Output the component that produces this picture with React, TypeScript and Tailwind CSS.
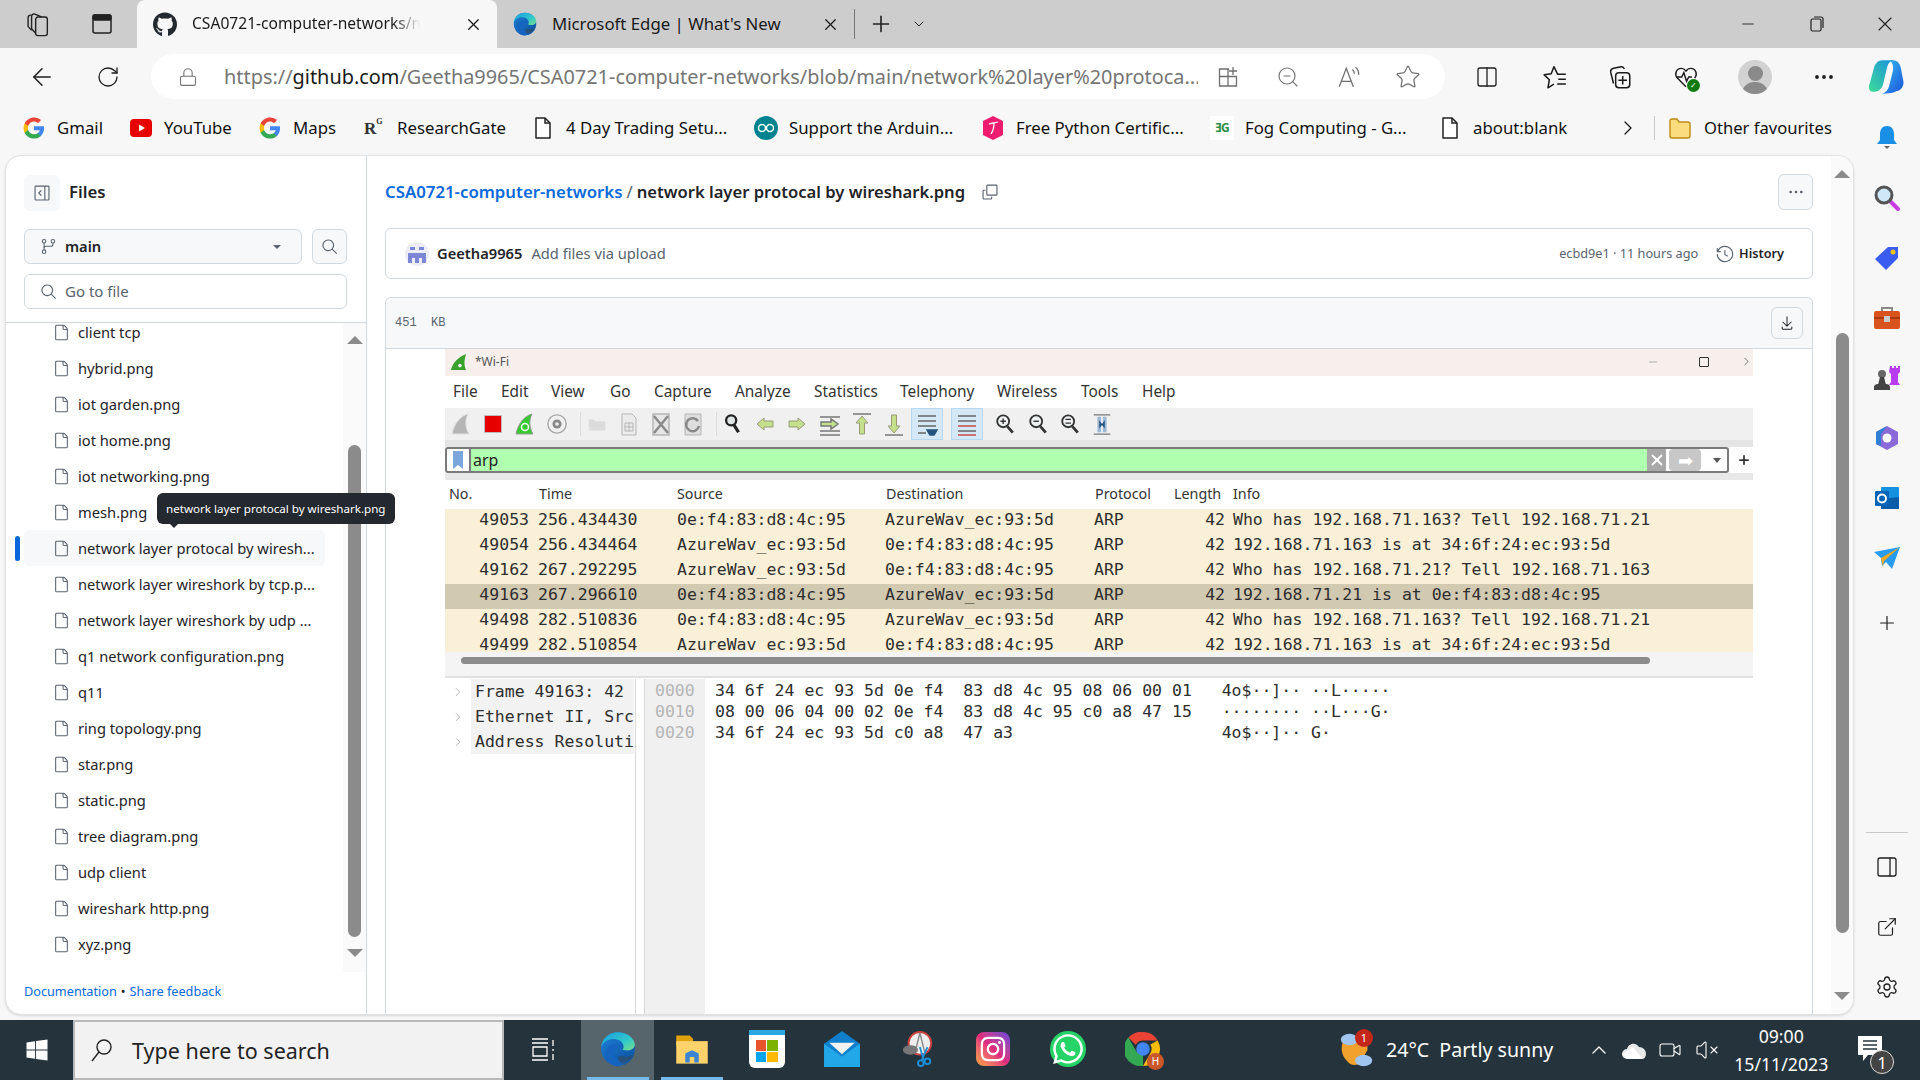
import type { ReactNode } from "react";
import {
  ArrowLeft,
  ChevronDown,
  ChevronRight,
  ChevronUp,
  Columns2,
  Ellipsis,
  ExternalLink,
  Lock,
  Minus,
  PanelRight,
  Plus,
  RotateCw,
  Settings,
  Star,
  Video,
  VolumeX,
  X,
  ZoomOut,
} from "lucide-react";
import { FaGithub, FaInstagram, FaWhatsapp, FaWindows } from "react-icons/fa";
import {
  GoCopy,
  GoDownload,
  GoFile,
  GoGitBranch,
  GoHistory,
  GoKebabHorizontal,
  GoSearch,
  GoSidebarExpand,
} from "react-icons/go";

const files = [
  "client tcp",
  "hybrid.png",
  "iot garden.png",
  "iot home.png",
  "iot networking.png",
  "mesh.png",
  "network layer protocal by wiresh...",
  "network layer wireshork by tcp.p...",
  "network layer wireshork by udp ...",
  "q1 network configuration.png",
  "q11",
  "ring topology.png",
  "star.png",
  "static.png",
  "tree diagram.png",
  "udp client",
  "wireshark http.png",
  "xyz.png",
];

const packets = [
  ["49053", "256.434430", "0e:f4:83:d8:4c:95", "AzureWav_ec:93:5d", "Who has 192.168.71.163? Tell 192.168.71.21"],
  ["49054", "256.434464", "AzureWav_ec:93:5d", "0e:f4:83:d8:4c:95", "192.168.71.163 is at 34:6f:24:ec:93:5d"],
  ["49162", "267.292295", "AzureWav_ec:93:5d", "0e:f4:83:d8:4c:95", "Who has 192.168.71.21? Tell 192.168.71.163"],
  ["49163", "267.296610", "0e:f4:83:d8:4c:95", "AzureWav_ec:93:5d", "192.168.71.21 is at 0e:f4:83:d8:4c:95"],
  ["49498", "282.510836", "0e:f4:83:d8:4c:95", "AzureWav_ec:93:5d", "Who has 192.168.71.163? Tell 192.168.71.21"],
  ["49499", "282.510854", "AzureWav_ec:93:5d", "0e:f4:83:d8:4c:95", "192.168.71.163 is at 34:6f:24:ec:93:5d"],
];

const hexLines = [
  ["0000", "34 6f 24 ec 93 5d 0e f4  83 d8 4c 95 08 06 00 01", "4o$··]·· ··L·····"],
  ["0010", "08 00 06 04 00 02 0e f4  83 d8 4c 95 c0 a8 47 15", "········ ··L···G·"],
  ["0020", "34 6f 24 ec 93 5d c0 a8  47 a3                  ", "4o$··]·· G·"],
];

function GoogleIcon() {
  return (
    <svg viewBox="0 0 24 24" className="w-[22px] h-[22px]">
      <path fill="#4285f4" d="M23 12.3c0-.8-.1-1.600-.2-2.300H12v4.400h6.200c-.3 1.400-1.100 2.600-2.300 3.400v2.800h3.700c2.100-2 3.400-4.900 3.400-8.300z" />
      <path fill="#34a853" d="M12 23.500c3.100 0 5.700-1 7.600-2.800l-3.700-2.900c-1 .7-2.300 1.100-3.900 1.100-3 0-5.500-2-6.400-4.700H1.800v2.900c1.900 3.800 5.800 6.400 10.200 6.400z" />
      <path fill="#fbbc05" d="M5.600 14.200c-.5-1.400-.5-3 0-4.400V6.900H1.800c-1.600 3.200-1.600 7 0 10.200l3.800-2.900z" />
      <path fill="#ea4335" d="M12 5c1.700 0 3.200.6 4.400 1.700l3.300-3.300C17.700 1.600 15.100.500 12 .500 7.600.500 3.700 3.100 1.800 6.900l3.800 2.900C6.500 7 9 5 12 5z" />
    </svg>
  );
}

function PageIcon() {
  return (
    <svg viewBox="0 0 20 24" className="w-[20px] h-[24px]" fill="#fff" stroke="#222" strokeWidth="1.5">
      <path d="M3 2h9l5 5v15H3z" strokeLinejoin="round" />
      <path d="M12 2v5h5" fill="none" />
    </svg>
  );
}

const bookmarks: { label: string; width: string; icon: ReactNode }[] = [
  { label: "Gmail", width: "w-[107px]", icon: <GoogleIcon /> },
  {
    label: "YouTube",
    width: "w-[129px]",
    icon: (
      <svg viewBox="0 0 22 22" className="w-[24px] h-[22px]">
        <rect x="0" y="2" width="22" height="18" rx="4" fill="#e60000" />
        <path d="M9 7.500v7l6-3.500z" fill="#fff" />
      </svg>
    ),
  },
  { label: "Maps", width: "w-[104px]", icon: <GoogleIcon /> },
  {
    label: "ResearchGate",
    width: "w-[169px]",
    icon: (
      <div className="w-[24px] h-[24px] bg-[#f7f7f7] flex items-start text-[#333] font-['Liberation_Serif',serif] font-bold leading-none pt-[4px] pl-[2px]">
        <span className="text-[17px]">R</span>
        <span className="text-[8px] -mt-[2px]">G</span>
      </div>
    ),
  },
  { label: "4 Day Trading Setu...", width: "w-[223px]", icon: <PageIcon /> },
  {
    label: "Support the Arduin...",
    width: "w-[227px]",
    icon: (
      <svg viewBox="0 0 24 24" className="w-[24px] h-[24px]">
        <circle cx="12" cy="12" r="12" fill="#00838f" />
        <circle cx="8" cy="12" r="3.500" fill="none" stroke="#fff" strokeWidth="1.500" />
        <circle cx="16" cy="12" r="3.500" fill="none" stroke="#fff" strokeWidth="1.500" />
      </svg>
    ),
  },
  {
    label: "Free Python Certific...",
    width: "w-[229px]",
    icon: (
      <svg viewBox="0 0 24 24" className="w-[24px] h-[26px]">
        <path d="M12 0l10 5v14l-10 5L2 19V5z" fill="#ed1c6f" />
        <path d="M8 8c3-1 6-1 9-2M13 7c0 4-1 8-3 11" fill="none" stroke="#fff" strokeWidth="1.300" />
      </svg>
    ),
  },
  {
    label: "Fog Computing - G...",
    width: "w-[228px]",
    icon: (
      <div className="w-[24px] h-[24px] bg-white flex items-center justify-center text-[#2f8d46] text-[12px] font-bold leading-none tracking-[-1px]">
        ƎG
      </div>
    ),
  },
  { label: "about:blank", width: "w-[178px]", icon: <PageIcon /> },
];

function EdgeLogo({ className }: { className: string }) {
  return (
    <svg viewBox="0 0 32 32" className={className}>
      <defs>
        <linearGradient id="edgeTop" x1="0" y1="0" x2="1" y2="1">
          <stop offset="0" stopColor="#1b9de2" />
          <stop offset="0.6" stopColor="#30c8c9" />
          <stop offset="1" stopColor="#7be08c" />
        </linearGradient>
        <linearGradient id="edgeLow" x1="0" y1="0" x2="1" y2="1">
          <stop offset="0" stopColor="#1d7fd6" />
          <stop offset="1" stopColor="#0b4f9e" />
        </linearGradient>
      </defs>
      <circle cx="16" cy="16" r="15" fill="url(#edgeLow)" />
      <path d="M16 1C8 1 2 6.500 1 14c2-5 7-7 11-7 6 0 9 3.500 9 7 0 1.500-1 2.500-1 2.500s4.500 2 8 0c2-1 3-3 3-5C30 6 24 1 16 1z" fill="url(#edgeTop)" />
      <path d="M13 31c-6-1.500-9-7-8.500-12 .7-4 4-7 8-7 3.500 0 5.500 1.500 6 3-3-.5-7 .8-7 5 0 4.500 5 7 9.500 6.300 3-.4 5-1.500 6.500-3-3 5-8.500 9-14.500 7.700z" fill="#1565c0" />
      <path d="M19 22c3 1.500 7 1 10-1-1 4-5 7-9 8-2.500-1-4-3-4-5 0-1 .8-2 3-2z" fill="#37474f" opacity="0.55" />
    </svg>
  );
}

function Tab({ active, icon, title, titleClass }: { active?: boolean; icon: ReactNode; title: string; titleClass: string }) {
  return (
    <div className={active ? "w-[360px] h-12 bg-[#f7f7f7] rounded-t-lg flex items-center pl-[16px] text-[#1a1a1a]" : "w-[357px] h-12 flex items-center pl-[16px] text-[#1a1a1a]"}>
      <div className="w-[24px] flex justify-center shrink-0">{icon}</div>
      <div className={`ml-[15px] whitespace-nowrap overflow-hidden ${titleClass}`}>{title}</div>
      <X className="ml-auto mr-[14px] shrink-0" size={19} strokeWidth={1.6} />
    </div>
  );
}

function TabStrip() {
  return (
    <div className="h-12 bg-[#cdcdcd] flex items-center shrink-0">
      <div className="w-[76px] flex justify-center">
        <svg viewBox="0 0 24 24" className="w-[28px] h-[28px]" fill="none" stroke="#222" strokeWidth="1.200">
          <rect x="10" y="6" width="10" height="16" rx="2" />
          <path d="M10 20L6.500 16V6c0-2 1-3 3-2.500L15 6" />
          <path d="M6.500 17.500L3.500 14V7c0-2 1-3 3-2.500" />
        </svg>
      </div>
      <div className="w-[61px] flex justify-start pl-[14px]">
        <svg viewBox="0 0 24 24" className="w-[24px] h-[24px]" fill="none" stroke="#222" strokeWidth="1.500">
          <rect x="3" y="3" width="18" height="18" rx="2" />
          <rect x="3" y="3" width="18" height="5" rx="1.500" fill="#222" />
        </svg>
      </div>
      <Tab
        active
        icon={<FaGithub size={25} color="#24292f" />}
        title="CSA0721-computer-networks/network"
        titleClass="w-[228px] text-[15.6px] [mask-image:linear-gradient(to_right,black_88%,transparent)]"
      />
      <Tab icon={<EdgeLogo className="w-[26px] h-[26px]" />} title="Microsoft Edge | What's New" titleClass="w-[260px] text-[16.8px]" />
      <div className="w-px h-[30px] bg-[#777]" />
      <Plus className="ml-[13px]" size={26} strokeWidth={1.500} color="#222" />
      <ChevronDown className="ml-[17px]" size={16} strokeWidth={1.500} color="#222" />
      <div className="ml-auto flex items-center text-[#222]">
        <Minus size={18} strokeWidth={1.200} className="mr-[51px]" />
        <svg viewBox="0 0 18 18" className="w-[18px] h-[18px] mr-[47px]" fill="none" stroke="#222" strokeWidth="1.200">
          <rect x="3" y="4" width="10" height="12" rx="1.500" />
          <path d="M6 2h7a2 2 0 0 1 2 2v9" />
        </svg>
        <X size={24} strokeWidth={1.100} className="mr-[23px]" />
      </div>
    </div>
  );
}

function AddressBar() {
  return (
    <div className="h-[60px] bg-[#f7f7f7] flex items-center pb-[3px] shrink-0 text-[#1f1f1f]">
      <div className="w-[84px] flex justify-center pl-0">
        <ArrowLeft size={28} strokeWidth={1.300} />
      </div>
      <div className="w-[48px] flex justify-center">
        <RotateCw size={24} strokeWidth={1.300} />
      </div>
      <div className="ml-[19px] w-[1294px] h-[45px] bg-white rounded-full flex items-center text-[#757575]">
        <Lock className="ml-[27px] shrink-0" size={20} strokeWidth={1.300} />
        <div className="ml-[26px] w-[974px] text-[19.9px] whitespace-nowrap overflow-hidden">
          https://<span className="text-[#1a1a1a]">github.com</span>/Geetha9965/CSA0721-computer-networks/blob/main/network%20layer%20protoca...
        </div>
        <svg viewBox="0 0 24 24" className="ml-[18px] w-[24px] h-[24px] shrink-0" fill="none" stroke="#6f6f6f" strokeWidth="1.300">
          <path d="M13 4H3.500v17H20.500V11.500H3.500M12 4v17M17 2v8M13 6h8" />
        </svg>
        <ZoomOut className="ml-[36px] shrink-0" size={24} strokeWidth={1.200} />
        <svg viewBox="0 0 24 24" className="ml-[36px] w-[26px] h-[26px] shrink-0" fill="none" stroke="#6f6f6f" strokeWidth="1.200">
          <path d="M3 21L9.500 4 16 21M5 16h9M15 5c1.500 1 2 2.500 2 4M18 3c2.200 1.500 3 4 3 7" />
        </svg>
        <Star className="ml-[33px] shrink-0" size={26} strokeWidth={1.200} />
      </div>
      <Columns2 className="ml-[30px]" size={24} strokeWidth={1.300} />
      <svg viewBox="0 0 24 24" className="ml-[43px] w-[26px] h-[26px]" fill="none" stroke="#1a1a1a" strokeWidth="1.400" strokeLinejoin="round">
        <path d="M14.500 9.500L11 2.500 8.500 9 2 10l4.800 4.500L5.500 22l5.500-3.500" />
        <path d="M14 9.500h8M15 14h7M14 18.500h8" />
      </svg>
      <svg viewBox="0 0 24 24" className="ml-[39px] w-[26px] h-[26px]" fill="none" stroke="#1a1a1a" strokeWidth="1.400">
        <path d="M6 18L3.500 8c-.4-2 .5-3.500 2.500-4l7-1.500c1.500-.2 2.500.5 3 2" />
        <rect x="8" y="8" width="13" height="14" rx="3" />
        <path d="M14.500 11v8M10.500 15h8" />
      </svg>
      <div className="ml-[40px] w-[26px] h-[26px] relative">
        <svg viewBox="0 0 24 24" className="w-[26px] h-[26px]" fill="none" stroke="#1a1a1a" strokeWidth="1.300">
          <path d="M12 21L4 13C1 9.500 3 4 7.500 4c2 0 3.500 1 4.500 2.500C13 5 14.500 4 16.500 4 21 4 23 9.500 20 13" />
          <path d="M3 12h5l2-4 2.500 8 2-4h3" />
        </svg>
        <div className="absolute -right-[1px] -bottom-[2px] w-[13px] h-[13px] rounded-full bg-[#107c10] flex items-center justify-center text-white text-[8px] leading-none">✓</div>
      </div>
      <div className="ml-[39px] w-[34px] h-[34px] rounded-full bg-[#d2d2d2] flex flex-col items-center justify-end overflow-hidden">
        <div className="w-[15px] h-[15px] rounded-full bg-[#8a8a8a] mb-[1px]" />
        <div className="w-[26px] h-[12px] rounded-t-full bg-[#8a8a8a]" />
      </div>
      <Ellipsis className="ml-[40px]" size={24} strokeWidth={1.800} />
      <svg viewBox="0 0 32 32" className="ml-[32px] w-[36px] h-[36px]">
        <defs>
          <linearGradient id="copA" x1="0" y1="1" x2="1" y2="0">
            <stop offset="0" stopColor="#3ddc97" />
            <stop offset="1" stopColor="#1a8fe0" />
          </linearGradient>
          <linearGradient id="copB" x1="0" y1="0" x2="1" y2="1">
            <stop offset="0" stopColor="#35c4f5" />
            <stop offset="1" stopColor="#1d52d8" />
          </linearGradient>
        </defs>
        <path d="M13 1h10c-3 .5-5 2.500-6 6l-3 13c-1 6-4 9-8 9H4c-2.500 0-3.500-2.500-3-5.500L5 9c1-5 4-8 8-8z" fill="url(#copA)" />
        <path d="M19 1h3c4 0 6 2.500 7 6l2.500 13c.5 4-2 8-6 8.500C23 30 18 31 12 31c4-1 6-4 7-8l3-12c1-4 0-8-3-10z" fill="url(#copB)" />
      </svg>
    </div>
  );
}

function BookmarkBar() {
  return (
    <div className="h-[47px] flex items-center pl-[22px] pb-[7px] shrink-0 text-[#111]">
      {bookmarks.map((b) => (
        <div key={b.label} className={`${b.width} flex items-center shrink-0`}>
          <div className="w-[24px] h-[26px] flex items-center justify-center shrink-0">{b.icon}</div>
          <span className="ml-[11px] text-[16.8px] whitespace-nowrap">{b.label}</span>
        </div>
      ))}
      <ChevronRight className="shrink-0" size={24} strokeWidth={1.200} />
      <div className="ml-[14px] w-px h-[24px] bg-[#c8c8c8] shrink-0" />
      <svg viewBox="0 0 24 24" className="ml-[13px] w-[24px] h-[24px] shrink-0" fill="#fbdc7e" stroke="#bd8c16" strokeWidth="1.400">
        <path d="M2 5a2 2 0 0 1 2-2h5l2 3h9a2 2 0 0 1 2 2v12a2 2 0 0 1-2 2H4a2 2 0 0 1-2-2z" />
      </svg>
      <span className="ml-[12px] text-[16.6px] whitespace-nowrap">Other favourites</span>
    </div>
  );
}

function ScrollTrack({ width, thumbTop, thumbHeight, bottomGap }: { width: string; thumbTop: string; thumbHeight: string; bottomGap: string }) {
  return (
    <div className={`${width} bg-[#fafafa] flex flex-col items-center shrink-0`}>
      <div className={`w-0 h-0 border-x-[8px] border-x-transparent border-b-[8px] border-b-[#8b8b8b] ${thumbTop}`} />
      <div className={`w-[13px] rounded-full bg-[#8b8b8b] ${thumbHeight}`} />
      <div className={`w-0 h-0 border-x-[8px] border-x-transparent border-t-[8px] border-t-[#8b8b8b] ${bottomGap}`} />
    </div>
  );
}

function FileSidebar() {
  return (
    <div className="w-[361px] h-full border-r border-[#d1d9e0] flex flex-col shrink-0 relative">
      <div className="h-[167px] border-b border-[#d1d9e0] px-[18px] pt-[19px] shrink-0">
        <div className="flex items-center">
          <div className="w-9 h-9 rounded-md bg-[#f6f8fa] flex items-center justify-center text-[#59636e]">
            <GoSidebarExpand size={18} />
          </div>
          <span className="ml-[9px] pb-[2px] text-[16.8px] font-semibold text-[#1f2328]">Files</span>
        </div>
        <div className="flex gap-[10px] mt-[18px]">
          <div className="w-[278px] h-[35px] rounded-md bg-[#f6f8fa] border border-[#d1d9e0] flex items-center pl-[15px] pr-[20px] text-[#1f2328]">
            <GoGitBranch size={17} color="#59636e" />
            <span className="ml-[8px] text-[14.7px] font-semibold">main</span>
            <div className="ml-auto w-0 h-0 border-x-[4px] border-x-transparent border-t-[4px] border-t-[#59636e]" />
          </div>
          <div className="w-[35px] h-[35px] rounded-md bg-[#f6f8fa] border border-[#d1d9e0] flex items-center justify-center text-[#59636e]">
            <GoSearch size={17} />
          </div>
        </div>
        <div className="mt-[10px] w-[323px] h-[35px] rounded-md border border-[#d1d9e0] flex items-center pl-[15px]">
          <GoSearch size={17} color="#59636e" />
          <span className="ml-[8px] text-[15px] text-[#59636e]">Go to file</span>
        </div>
      </div>
      <div className="h-[649px] flex overflow-hidden shrink-0">
        <div className="flex-1 -mt-[9px] pl-[9px]">
          {files.map((name, i) => (
            <div key={name} className="h-9 flex items-center">
              <div className={i === 6 ? "w-[5px] h-[25px] bg-[#0969da] rounded-full" : "w-[5px]"} />
              <div className={i === 6 ? "ml-[4px] w-[301px] h-9 rounded-md bg-[#f6f8fa] flex items-center pl-[29px]" : "ml-[4px] w-[301px] h-9 flex items-center pl-[29px]"}>
                <GoFile size={17} color="#59636e" />
                <span className="ml-[8px] text-[14.7px] text-[#1f2328] whitespace-nowrap">{name}</span>
              </div>
            </div>
          ))}
        </div>
        <ScrollTrack width="w-[23px]" thumbTop="mt-[13px]" thumbHeight="mt-[101px] h-[492px]" bottomGap="mt-[12px]" />
      </div>
      <div className="flex-1 flex items-center pl-[18px] text-[12.7px] text-[#0969da] pb-[2px]">
        <span>Documentation</span>
        <span className="mx-1 text-[#1f2328]">•</span>
        <span>Share feedback</span>
      </div>
      <div className="absolute left-[151px] top-[337px] z-10 h-[31px] px-[9px] rounded-md bg-[#24292f] text-white text-[11.6px] flex items-center whitespace-nowrap">
        network layer protocal by wireshark.png
        <div className="absolute left-[13px] -bottom-[4px] w-0 h-0 border-x-[4px] border-x-transparent border-t-[4px] border-t-[#24292f]" />
      </div>
    </div>
  );
}

function ToolIcon({ children, extra }: { children: ReactNode; extra?: string }) {
  return <div className={`w-[32px] h-[32px] flex items-center justify-center shrink-0 ${extra ?? ""}`}>{children}</div>;
}

function Arrow({ dir, color }: { dir: "left" | "right"; color: string }) {
  const rotate = { left: 0, right: 180 }[dir];
  return (
    <svg viewBox="0 0 20 20" className="w-[20px] h-[20px]" style={{ transform: `rotate(${rotate}deg)` }}>
      <path d="M2 10l7-6v3h9v6H9v3z" fill={color} stroke="#9a9a7a" strokeWidth="1" />
    </svg>
  );
}

function Magnifier({ sign }: { sign: string }) {
  return (
    <svg viewBox="0 0 24 24" className="w-[22px] h-[22px]" fill="none" stroke="#333" strokeWidth="2">
      <circle cx="10" cy="9" r="6.500" fill="#eef2f2" />
      <path d="M14.500 14.500l6 7" strokeWidth="3" />
      <path d={sign} strokeWidth="1.500" />
    </svg>
  );
}

function SharkToolbar() {
  return (
    <div className="h-[32px] bg-[#f0f0f0] flex items-center shrink-0">
      <ToolIcon>
        <svg viewBox="0 0 24 24" className="w-[24px] h-[24px]">
          <path d="M3 22C5 12 11 4 19 2c-3 6-3 13 1 20z" fill="#b5b5b5" stroke="#dedede" />
        </svg>
      </ToolIcon>
      <ToolIcon>
        <div className="w-[18px] h-[18px] bg-[#e60000] border border-[#bbb]" />
      </ToolIcon>
      <ToolIcon>
        <svg viewBox="0 0 24 24" className="w-[24px] h-[24px]">
          <path d="M3 22C5 12 11 4 19 2c-3 6-3 13 1 20z" fill="#35c92f" stroke="#9a9a9a" />
          <circle cx="12" cy="15" r="3.500" fill="none" stroke="#fff" strokeWidth="1.500" />
        </svg>
      </ToolIcon>
      <ToolIcon>
        <svg viewBox="0 0 24 24" className="w-[22px] h-[22px]">
          <circle cx="12" cy="12" r="10" fill="#f0f0f0" stroke="#a8a8a8" strokeWidth="1.500" />
          <circle cx="12" cy="12" r="5" fill="#888" />
          <circle cx="12" cy="12" r="2" fill="#eee" />
        </svg>
      </ToolIcon>
      <div className="w-px h-[24px] bg-[#dcdcdc] ml-[7px]" />
      <ToolIcon>
        <svg viewBox="0 0 24 24" className="w-[22px] h-[22px]">
          <path d="M3 7h6l1 2h11v10H3z" fill="#dcdcdc" />
        </svg>
      </ToolIcon>
      <ToolIcon>
        <svg viewBox="0 0 24 24" className="w-[24px] h-[24px]" fill="#ececec" stroke="#b5b5b5">
          <path d="M5 2h10l4 4v17H5z" />
          <path d="M8 11h8v8H8zM8 15h8M12 11v8" fill="none" />
        </svg>
      </ToolIcon>
      <ToolIcon>
        <svg viewBox="0 0 24 24" className="w-[24px] h-[24px]" fill="#e6e6e6" stroke="#8a8a8a" strokeWidth="1.500">
          <path d="M4 2h16v21H4z" stroke="#b5b5b5" />
          <path d="M5 4l14 17M19 4L5 21" strokeWidth="2.500" fill="none" />
        </svg>
      </ToolIcon>
      <ToolIcon>
        <svg viewBox="0 0 24 24" className="w-[24px] h-[24px]" fill="#dedede" stroke="#b5b5b5">
          <path d="M4 2h16v21H4z" />
          <path d="M17 9a6.500 6.500 0 1 0 1 5" fill="none" stroke="#888" strokeWidth="2.500" />
        </svg>
      </ToolIcon>
      <div className="w-px h-[24px] bg-[#dcdcdc] ml-[7px]" />
      <ToolIcon>
        <svg viewBox="0 0 24 24" className="w-[22px] h-[22px]" fill="none" stroke="#222">
          <circle cx="10" cy="8" r="5.500" fill="#dfe5e5" strokeWidth="2.500" />
          <path d="M13 13l5 8" strokeWidth="3.500" />
        </svg>
      </ToolIcon>
      <ToolIcon>
        <Arrow dir="left" color="#c4e08a" />
      </ToolIcon>
      <ToolIcon>
        <Arrow dir="right" color="#c4e08a" />
      </ToolIcon>
      <ToolIcon extra="ml-px">
        <svg viewBox="0 0 24 24" className="w-[24px] h-[24px]" fill="none" stroke="#777" strokeWidth="1.500">
          <path d="M2 5h20M2 19h20M2 23h20" />
          <path d="M3 10h10V7l7 5-7 5v-3H3z" fill="#c4e08a" />
        </svg>
      </ToolIcon>
      <ToolIcon>
        <svg viewBox="0 0 24 24" className="w-[24px] h-[24px]">
          <path d="M3 2h18" stroke="#777" strokeWidth="1.500" />
          <path d="M12 4l6 7h-3.500v11h-5V11H6z" fill="#c4e08a" stroke="#9a9a7a" />
        </svg>
      </ToolIcon>
      <ToolIcon>
        <svg viewBox="0 0 24 24" className="w-[24px] h-[24px]">
          <path d="M3 23h18" stroke="#777" strokeWidth="1.500" />
          <path d="M12 21l6-7h-3.500V3h-5v11H6z" fill="#c4e08a" stroke="#9a9a7a" />
        </svg>
      </ToolIcon>
      <ToolIcon extra="ml-px bg-[#d5e8f7] border border-[#b8d8f0]">
        <svg viewBox="0 0 24 24" className="w-[24px] h-[24px]" fill="none" stroke="#666" strokeWidth="1.500">
          <path d="M3 4h18M3 9h18M3 14h18M3 21h8" />
          <path d="M12 18h10l-3 5h-4z" fill="#24537e" stroke="#24537e" />
        </svg>
      </ToolIcon>
      <ToolIcon extra="ml-[8px] bg-[#d5e8f7] border border-[#b8d8f0]">
        <svg viewBox="0 0 24 24" className="w-[24px] h-[24px]" fill="none" strokeWidth="1.500">
          <path d="M3 4h18M3 9h18" stroke="#666" />
          <path d="M3 14h18" stroke="#c94a4a" />
          <path d="M3 19h18" stroke="#666" />
          <path d="M3 23h18" stroke="#c94a4a" />
        </svg>
      </ToolIcon>
      <ToolIcon extra="ml-[6px]">
        <Magnifier sign="M7 9h6M10 6v6" />
      </ToolIcon>
      <ToolIcon extra="ml-px">
        <Magnifier sign="M7 9h6" />
      </ToolIcon>
      <ToolIcon>
        <Magnifier sign="M7 7h6M7 11h6" />
      </ToolIcon>
      <ToolIcon>
        <svg viewBox="0 0 24 24" className="w-[22px] h-[24px]">
          <path d="M3 2h18M3 23h18" stroke="#777" strokeWidth="1.500" />
          <path d="M7 4h4v17H7zM13 4h4v17h-4z" fill="#9bb8d6" />
          <path d="M9 8l3 4 3-4v9l-3-4-3 4z" fill="#24537e" />
        </svg>
      </ToolIcon>
    </div>
  );
}

function Wireshark() {
  return (
    <div className="w-[1308px] ml-[59px] flex flex-col h-full text-[#333]">
      <div className="h-[27px] bg-[#f7efeb] flex items-center pl-[4px] pb-[2px] shrink-0">
        <svg viewBox="0 0 20 20" className="ml-[1px] w-[18px] h-[18px]">
          <path d="M1 19C3 11 9 4 18 1c-2 6-3 12 0 18z" fill="#3aa12f" />
          <circle cx="11" cy="14" r="2" fill="#fff" />
        </svg>
        <span className="ml-[7px] text-[12px] text-[#555]">*Wi-Fi</span>
        <Minus className="ml-auto text-[#aaa]" size={12} strokeWidth={2} />
        <div className="ml-[40px] w-[10px] h-[10px] border border-[#333] rounded-[1px]" />
        <ChevronRight className="ml-[31px] text-[#555]" size={13} strokeWidth={1.500} />
      </div>
      <div className="h-[32px] flex items-center pl-[8px] text-[15.4px] text-[#333] shrink-0">
        {[
          ["File", "w-[48px]"],
          ["Edit", "w-[50px]"],
          ["View", "w-[59px]"],
          ["Go", "w-[44px]"],
          ["Capture", "w-[81px]"],
          ["Analyze", "w-[79px]"],
          ["Statistics", "w-[86px]"],
          ["Telephony", "w-[97px]"],
          ["Wireless", "w-[84px]"],
          ["Tools", "w-[61px]"],
          ["Help", "w-[50px]"],
        ].map(([label, width]) => (
          <span key={label} className={`${width} shrink-0`}>
            {label}
          </span>
        ))}
      </div>
      <SharkToolbar />
      <div className="h-[7px] bg-[#e4e4e4] shrink-0" />
      <div className="h-[26px] flex items-center shrink-0">
        <div className="w-[1284px] h-[26px] rounded-[3px] border-2 border-[#7a7a7a] flex items-center bg-white">
          <div className="w-[24px] h-full flex items-center justify-center border-r-2 border-[#7a7a7a]">
            <svg viewBox="0 0 12 18" className="w-[12px] h-[18px]">
              <path d="M1 0h10v18l-5-4-5 4z" fill="#7aa6dc" />
            </svg>
          </div>
          <div className="flex-1 h-full bg-[#afffaf] pl-[2px] text-[16px] leading-[22px] text-[#222]">arp</div>
          <div className="w-[19px] h-full bg-[#a8a8a8] flex items-center justify-center">
            <X size={18} color="#fff" strokeWidth={2.500} />
          </div>
          <div className="w-[32px] ml-[3px] h-full bg-[#c7c7c7] rounded-sm flex items-center justify-center text-white text-[18px] leading-none">➡</div>
          <div className="ml-[12px] mr-[6px] w-0 h-0 border-x-[4px] border-x-transparent border-t-[5px] border-t-[#555]" />
        </div>
        <Plus className="ml-[8px] text-[#333]" size={14} strokeWidth={3} />
      </div>
      <div className="h-[7px] bg-[#e8e8e8] shrink-0" />
      <div className="h-[29px] pb-[2px] grid grid-cols-[93px_139px_208px_209px_80px_59px_1fr] items-center text-[14.3px] text-[#333] shrink-0">
        <span className="pl-[4px]">No.</span>
        <span className="pl-[1px]">Time</span>
        <span>Source</span>
        <span className="pl-[1px]">Destination</span>
        <span className="pl-[1px]">Protocol</span>
        <span>Length</span>
        <span>Info</span>
      </div>
      <div className="h-[143px] overflow-hidden shrink-0 font-['DejaVu_Sans_Mono',monospace] text-[16.5px] text-[#2e2e2e]">
        {packets.map((p, i) => (
          <div
            key={p[0]}
            className={
              i === 3
                ? "h-[25px] leading-[22px] grid grid-cols-[93px_139px_208px_209px_80px_59px_1fr] bg-[#d2c9b1] whitespace-pre"
                : "h-[25px] leading-[22px] grid grid-cols-[93px_139px_208px_209px_80px_59px_1fr] bg-[#faf0d7] whitespace-pre"
            }
          >
            <span className="text-right pr-[9px]">{p[0]}</span>
            <span>{p[1]}</span>
            <span>{p[2]}</span>
            <span>{p[3]}</span>
            <span>ARP</span>
            <span className="text-right pr-[8px]">42</span>
            <span>{p[4]}</span>
          </div>
        ))}
      </div>
      <div className="h-[24px] bg-[#f4f4f4] pt-[5px] pl-[16px] shrink-0">
        <div className="w-[1189px] h-[7px] bg-[#8b8b8b] rounded-sm" />
      </div>
      <div className="h-[3px] border-t-2 border-[#e0e0e0] shrink-0" />
      <div className="flex-1 flex font-['DejaVu_Sans_Mono',monospace] text-[16.5px] text-[#2e2e2e] min-h-0">
        <div className="w-[189px] shrink-0 overflow-hidden">
          {["Frame 49163: 42 bytes on wire", "Ethernet II, Src: 0e:f4:83", "Address Resolution Protocol"].map((t) => (
            <div key={t} className="h-[25px] flex items-center">
              <ChevronRight className="ml-[6px] mr-[6px] shrink-0 text-[#aaa]" size={14} strokeWidth={1.500} />
              <span className="bg-[#f2f2f2] pl-[4px] leading-[25px] whitespace-pre">{t}</span>
            </div>
          ))}
        </div>
        <div className="w-[10px] ml-px border-x border-[#d8d8d8] shrink-0" />
        <div className="flex-1 flex min-w-0">
          <div className="w-[60px] bg-[#f0f0f0] text-[#b5b5b5] pl-[10px] pt-[1px] overflow-hidden">
            {hexLines.map((l) => (
              <div key={l[0]} className="h-[21px] leading-[21px]">{l[0]}</div>
            ))}
          </div>
          <div className="pl-[10px] pt-[1px]">
            {hexLines.map((l) => (
              <div key={l[0]} className="h-[21px] leading-[21px] whitespace-pre">
                {l[1]}
                {"   "}
                {l[2]}
              </div>
            ))}
          </div>
        </div>
      </div>
    </div>
  );
}

function MainPanel() {
  return (
    <div className="flex-1 flex min-w-0 h-full">
      <div className="flex-1 min-w-0 pl-[18px] pr-[18px] flex flex-col">
        <div className="h-[72px] flex items-center shrink-0">
          <span className="text-[16.8px] font-semibold text-[#0969da]">CSA0721-computer-networks</span>
          <span className="mx-[4px] text-[16.8px] text-[#59636e]">/</span>
          <span className="text-[16.6px] font-semibold text-[#1f2328]">network layer protocal by wireshark.png</span>
          <GoCopy className="ml-[16px] text-[#59636e]" size={18} />
          <div className="ml-auto w-[35px] h-[36px] rounded-md bg-[#f6f8fa] border border-[#d1d9e0] flex items-center justify-center text-[#59636e]">
            <GoKebabHorizontal size={16} />
          </div>
        </div>
        <div className="h-[51px] rounded-md border border-[#d1d9e0] flex items-center pl-[19px] pr-[28px] shrink-0">
          <svg viewBox="0 0 24 24" className="w-[24px] h-[24px]">
            <circle cx="12" cy="12" r="12" fill="#ececf4" />
            <path d="M5 5h5v3H5zM14 5h5v3h-5zM3 11h18v10h-4v-5h-3v5h-4v-5H7v5H3z" fill="#7b86d6" />
          </svg>
          <span className="ml-[8px] text-[14.7px] font-semibold text-[#1f2328]">Geetha9965</span>
          <span className="ml-[9px] text-[14.7px] text-[#59636e]">Add files via upload</span>
          <span className="ml-auto text-[12.7px] text-[#59636e]">ecbd9e1 · 11 hours ago</span>
          <GoHistory className="ml-[18px] text-[#59636e]" size={18} />
          <span className="ml-[5px] text-[12.7px] font-semibold text-[#1f2328]">History</span>
        </div>
        <div className="mt-[18px] flex-1 min-h-0 rounded-t-md border-x border-t border-[#d1d9e0] flex flex-col">
          <div className="h-[51px] bg-[#f6f8fa] border-b border-[#d1d9e0] rounded-t-md flex items-center pl-[9px] pr-[9px] shrink-0">
            <span className="font-['Liberation_Mono',monospace] text-[12px] text-[#59636e] whitespace-pre">451  KB</span>
            <div className="ml-auto w-[32px] h-[32px] rounded-md bg-[#f6f8fa] border border-[#d1d9e0] flex items-center justify-center text-[#1f2328]">
              <GoDownload size={16} />
            </div>
          </div>
          <div className="flex-1 min-h-0">
            <Wireshark />
          </div>
        </div>
      </div>
      <ScrollTrack width="w-[22px]" thumbTop="mt-[14px]" thumbHeight="mt-[155px] h-[600px]" bottomGap="mt-[59px]" />
    </div>
  );
}

function RightRail() {
  const slots: ReactNode[] = [
    <svg key="bell" viewBox="0 0 24 26" className="w-[24px] h-[26px]">
      <path d="M12 1c4.500 0 7 3.500 7 8v6l3 4H2l3-4V9c0-4.500 2.500-8 7-8z" fill="#1a8fe6" />
      <path d="M9 21h6l-3 3z" fill="#666" />
    </svg>,
    <svg key="search" viewBox="0 0 26 26" className="w-[26px] h-[26px]">
      <path d="M16 16l8 8" stroke="#c93ee0" strokeWidth="4" strokeLinecap="round" />
      <circle cx="10" cy="10" r="8" fill="#cfe7f7" stroke="#555" strokeWidth="3" />
    </svg>,
    <svg key="tag" viewBox="0 0 26 26" className="w-[26px] h-[26px]">
      <path d="M14 2h10v11L12 25 1 14z" fill="#3b5cf0" />
      <circle cx="19" cy="7" r="2.500" fill="#f5c518" />
    </svg>,
    <svg key="box" viewBox="0 0 28 26" className="w-[28px] h-[26px]">
      <path d="M9 6V3h10v3" fill="none" stroke="#888" strokeWidth="2" />
      <rect x="1" y="6" width="26" height="18" rx="2" fill="#d9531e" />
      <rect x="1" y="12" width="26" height="2" fill="#a83a10" />
      <rect x="11" y="11" width="6" height="6" fill="#ccc" />
    </svg>,
    <svg key="chess" viewBox="0 0 28 28" className="w-[28px] h-[28px]">
      <path d="M17 2h2v2h2V2h2v2h2V2h2v6l-2 2v8l2 3H16l2-3v-8l-2-2z" fill="#b83cf0" />
      <circle cx="9" cy="10" r="4" fill="#666" />
      <path d="M7 13h4l2 8H5zM1 23c0-2 2-3 4-3h8c2 0 4 1 4 3v3H1z" fill="#444" />
    </svg>,
    <svg key="m365" viewBox="0 0 26 26" className="w-[26px] h-[26px]">
      <path d="M13 1l11 6v12l-11 6L2 19V7z" fill="#8a6ad8" />
      <path d="M13 1L2 7v12l5 2V9z" fill="#2f7fd6" />
      <circle cx="13" cy="13" r="4.500" fill="#fff" />
    </svg>,
    <svg key="outlook" viewBox="0 0 26 26" className="w-[26px] h-[26px]">
      <rect x="7" y="2" width="18" height="22" rx="1" fill="#1490df" />
      <path d="M7 14l18-2v12H7z" fill="#0a5ca8" />
      <rect x="1" y="6" width="14" height="15" rx="1" fill="#0364b8" />
      <circle cx="8" cy="13.500" r="4" fill="none" stroke="#fff" strokeWidth="2" />
    </svg>,
    <svg key="send" viewBox="0 0 28 24" className="w-[28px] h-[24px]">
      <path d="M1 6L27 1 19 23l-6-7-4 4-1-8z" fill="#2a9cf0" />
      <path d="M8 12L27 1 11 15l-1 6z" fill="#f0a81e" />
    </svg>,
  ];
  return (
    <div className="w-[66px] shrink-0 flex flex-col items-center text-[#1f1f1f]">
      {slots.map((icon, i) => (
        <div key={i} className="h-[60px] flex items-center justify-center shrink-0">
          {icon}
        </div>
      ))}
      <div className="mt-[25px] h-[20px] flex items-center">
        <Plus size={22} strokeWidth={1.300} />
      </div>
      <div className="mt-auto w-[42px] h-px bg-[#c8c8c8]" />
      <div className="h-[60px] mt-[4px] flex items-center">
        <PanelRight size={24} strokeWidth={1.300} />
      </div>
      <div className="h-[60px] flex items-center">
        <ExternalLink size={22} strokeWidth={1.300} />
      </div>
      <div className="h-[60px] flex items-center">
        <Settings size={24} strokeWidth={1.300} />
      </div>
      <div className="h-[3px]" />
    </div>
  );
}

function TaskButton({ children, width, active, line }: { children: ReactNode; width: string; active?: boolean; line?: boolean }) {
  return (
    <div className={`${width} h-full flex flex-col items-center shrink-0 ${active ? "bg-[#56646b]" : ""}`}>
      <div className="flex-1 flex items-center justify-center">{children}</div>
      <div className={line ? "w-[62px] h-[3px] bg-[#76b9ed]" : "h-[3px]"} />
    </div>
  );
}

function Taskbar() {
  return (
    <div className="h-[60px] bg-[#25343c] flex items-stretch text-white shrink-0">
      <div className="w-[73px] flex items-center justify-center">
        <FaWindows size={24} />
      </div>
      <div className="w-[431px] bg-[#f2f2f2] border-2 border-[#b9b9b9] flex items-center pl-[15px] text-[#222]">
        <svg viewBox="0 0 24 24" className="w-[24px] h-[26px]" fill="none" stroke="#222" strokeWidth="1.400">
          <circle cx="14" cy="9" r="7" />
          <path d="M9 14l-7 9" />
        </svg>
        <span className="ml-[18px] mt-[3px] text-[21.5px]">Type here to search</span>
      </div>
      <div className="w-[77px] flex items-center justify-center">
        <svg viewBox="0 0 26 26" className="w-[26px] h-[26px]" fill="none" stroke="#fff" strokeWidth="1.300">
          <path d="M2 2h16M2 6h16M3 10h14v9H3zM2 23h16M23 3v6M23 12v2M23 17v6" />
        </svg>
      </div>
      <TaskButton width="w-[73px]" active line>
        <EdgeLogo className="w-[36px] h-[36px]" />
      </TaskButton>
      <TaskButton width="w-[75px]" line>
        <svg viewBox="0 0 32 32" className="w-[36px] h-[36px]">
          <path d="M2 4h12l3 3v6H2z" fill="#e0a30d" />
          <path d="M2 9h28v20H2z" fill="#fcd36a" />
          <path d="M10 28v-8l6-3 6 3v8h-4v-5h-4v5z" fill="#3a86d4" />
        </svg>
      </TaskButton>
      <TaskButton width="w-[75px]">
        <div className="w-[36px] h-[38px] bg-white rounded-b-md border-t-[5px] border-[#2aa7e0] flex items-center justify-center">
          <div className="grid grid-cols-2 gap-px w-[22px] h-[22px]">
            <div className="bg-[#e8542b]" />
            <div className="bg-[#7db200]" />
            <div className="bg-[#00a4ef]" />
            <div className="bg-[#ffb900]" />
          </div>
        </div>
      </TaskButton>
      <TaskButton width="w-[76px]">
        <svg viewBox="0 0 36 36" className="w-[38px] h-[38px]">
          <path d="M18 1l17 12v22H1V13z" fill="#0f7fcb" />
          <path d="M1 13l17 12 17-12v22H1z" fill="#22a8e8" />
          <path d="M6 12h24L18 23z" fill="#f2f2f2" />
        </svg>
      </TaskButton>
      <TaskButton width="w-[75px]">
        <svg viewBox="0 0 36 40" className="w-[34px] h-[38px]">
          <ellipse cx="20" cy="14" rx="12" ry="12" fill="#eee" stroke="#c84040" strokeWidth="2" />
          <path d="M20 3l-5 20M20 3l5 20" stroke="#888" strokeWidth="1.500" />
          <ellipse cx="10" cy="21" rx="8" ry="5" fill="#777" />
          <path d="M20 18l4 14M28 18l-6 14" stroke="#1c8fd8" strokeWidth="2" />
          <circle cx="21" cy="35" r="3" fill="none" stroke="#1c8fd8" strokeWidth="2" />
          <circle cx="28" cy="33" r="3" fill="none" stroke="#1c8fd8" strokeWidth="2" />
        </svg>
      </TaskButton>
      <TaskButton width="w-[75px]">
        <div className="w-[34px] h-[34px] rounded-lg bg-gradient-to-tr from-[#f9a534] via-[#e0287d] to-[#6a3bd8] flex items-center justify-center">
          <FaInstagram size={28} color="#fff" />
        </div>
      </TaskButton>
      <TaskButton width="w-[75px]">
        <div className="w-[36px] h-[36px] rounded-full bg-[#25d366] flex items-center justify-center">
          <FaWhatsapp size={34} color="#fff" />
        </div>
      </TaskButton>
      <TaskButton width="w-[76px]">
        <div className="relative w-[36px] h-[36px]">
          <svg viewBox="0 0 32 32" className="w-[36px] h-[36px]">
            <path d="M16 1a15 15 0 0 1 13 7.500H16a7.500 7.500 0 0 0-6.500 3.750L3 5.800A15 15 0 0 1 16 1z" fill="#ea4335" />
            <path d="M29 8.500A15 15 0 0 1 16 31l6.500-11.250A7.500 7.500 0 0 0 22.500 12z" fill="#fbbc05" />
            <path d="M16 31A15 15 0 0 1 3 5.800l6.500 11.200a7.500 7.500 0 0 0 6.500 4z" fill="#34a853" />
            <circle cx="16" cy="16" r="6" fill="#4285f4" />
          </svg>
          <div className="absolute -right-[3px] -bottom-[3px] w-[17px] h-[17px] rounded-full bg-[#c9572a] text-white text-[10px] flex items-center justify-center">H</div>
        </div>
      </TaskButton>
      <div className="ml-[154px] w-[44px] flex items-center justify-center relative">
        <svg viewBox="0 0 36 40" className="w-[36px] h-[38px]">
          <path d="M5 8a13 16 0 0 0 3 24c3 4 9 5 13 2l8-14V10z" fill="#f2a12e" />
          <ellipse cx="10" cy="9" rx="9" ry="6" fill="#9fc5f0" />
          <ellipse cx="25" cy="31" rx="9" ry="6" fill="#9fc5f0" />
        </svg>
        <div className="absolute right-[6px] top-[9px] w-[18px] h-[18px] rounded-full bg-[#c4261a] text-white text-[11px] flex items-center justify-center">1</div>
      </div>
      <div className="ml-[7px] flex items-center text-[19.6px] whitespace-pre">24°C  Partly sunny</div>
      <div className="ml-[34px] flex items-center">
        <ChevronUp size={24} strokeWidth={1.300} />
      </div>
      <div className="ml-[10px] flex items-center">
        <svg viewBox="0 0 26 20" className="w-[26px] h-[20px]">
          <path d="M6 19a5 5 0 0 1 0-10c1-5 8-8 12-2 4 0 7 3 7 7 0 3-2 5-4 5z" fill="#e8e8e8" />
          <path d="M1 14l11-7 10 12H6z" fill="#fff" />
        </svg>
      </div>
      <div className="ml-[11px] flex items-center">
        <Video size={24} strokeWidth={1.100} />
      </div>
      <div className="ml-[13px] flex items-center">
        <VolumeX size={24} strokeWidth={1.100} />
      </div>
      <div className="w-[124px] flex flex-col items-center justify-center text-[17.7px] leading-[28px]">
        <span>09:00</span>
        <span>15/11/2023</span>
      </div>
      <div className="ml-[14px] flex items-center relative">
        <svg viewBox="0 0 26 30" className="w-[26px] h-[32px]" fill="#fff">
          <path d="M1 1h24v19H11l-5 6v-6H1z" />
          <path d="M6 6h14M6 10h14M6 14h14" stroke="#25343c" strokeWidth="1.300" />
        </svg>
        <div className="absolute -right-[11px] bottom-[6px] w-[24px] h-[24px] rounded-full bg-[#444] border border-[#ddd] text-white text-[17px] flex items-center justify-center leading-none">1</div>
      </div>
    </div>
  );
}

export default function App() {
  return (
    <div className="w-[1920px] h-[1080px] overflow-hidden bg-[#f7f7f7] flex flex-col font-['Noto_Sans',sans-serif]">
      <TabStrip />
      <AddressBar />
      <div className="flex h-[912px] shrink-0">
        <div className="w-[1854px] shrink-0 flex flex-col">
          <BookmarkBar />
          <div className="ml-[5px] h-[860px] bg-white rounded-[16px] border border-[#e2e2e2] shadow-sm flex overflow-hidden shrink-0">
            <FileSidebar />
            <MainPanel />
          </div>
        </div>
        <RightRail />
      </div>
      <Taskbar />
    </div>
  );
}
